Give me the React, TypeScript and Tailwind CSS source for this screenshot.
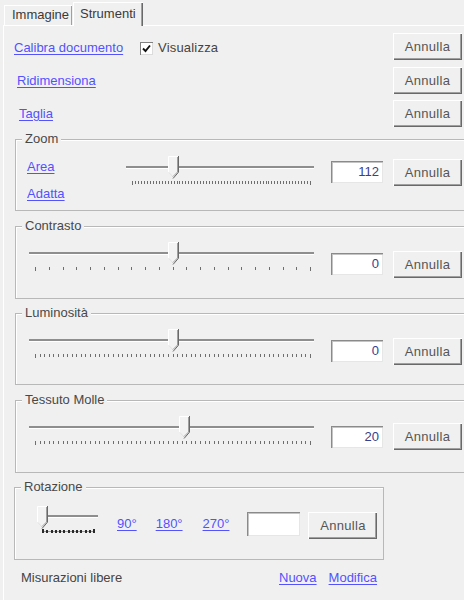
import React from "react";

const link = "text-[#5252ff] underline underline-offset-2 decoration-1";

function Button({ className = "" }: { className?: string }) {
  return (
    <button
      className={`flex h-[27px] w-[69px] shrink-0 items-center justify-center bg-[#f0f0f0] text-[#555] tracking-[0.3px] shadow-[inset_1px_1px_0_#ffffff,inset_-1px_-1px_0_#696969,inset_-2px_-2px_0_#a0a0a0] ${className}`}
    >
      Annulla
    </button>
  );
}

function Field({ value, className = "" }: { value: string; className?: string }) {
  return (
    <div
      className={`flex h-[22px] w-[52px] shrink-0 items-center justify-end bg-white pr-[4px] text-[#34418f] shadow-[inset_1px_1px_0_#8a8a8a,inset_2px_2px_0_#c4c4c4,inset_-1px_-1px_0_#e6e6e6] ${className}`}
    >
      {value}
    </div>
  );
}

function Group({
  title,
  className = "",
  children,
}: {
  title: string;
  className?: string;
  children?: React.ReactNode;
}) {
  return (
    <div className={`relative border border-[#b8b8b8] shadow-[inset_1px_1px_0_#ffffff] ${className}`}>
      <span className="absolute -top-[9px] left-[6px] bg-[#f0f0f0] px-[3px] text-[#484848]">{title}</span>
      {children}
    </div>
  );
}

function Thumb({ x }: { x: number }) {
  return (
    <g>
      <polygon points={`${x},0 ${x + 10},0 ${x + 10},16 ${x + 5},22 ${x},16`} fill="#f3f3f3" />
      <polyline points={`${x + 0.5},16 ${x + 0.5},0.5 ${x + 10.5},0.5`} fill="none" stroke="#ffffff" />
      <polyline points={`${x + 1},16.5 ${x + 5.5},21.5`} fill="none" stroke="#e2e2e2" />
      <polyline points={`${x + 9.5},1 ${x + 9.5},16 ${x + 5},20.5`} fill="none" stroke="#a0a0a0" />
      <polyline points={`${x + 10.5},0 ${x + 10.5},16.2 ${x + 5},22.5`} fill="none" stroke="#696969" />
    </g>
  );
}

function Slider({
  w,
  pos,
  ticks,
  className = "",
}: {
  w: number;
  pos: number;
  ticks: number;
  className?: string;
}) {
  const a = 6;
  const b = w - 4;
  const xs = Array.from({ length: ticks }, (_, i) => Math.round(a + ((b - a) * i) / (ticks - 1)));
  const cx = Math.round(a + (b - a) * pos);
  return (
    <svg width={w} height={30} className={`block shrink-0 ${className}`}>
      <rect x={0} y={10} width={w} height={2} fill="#8e8e8e" />
      <rect x={0} y={12} width={w} height={1} fill="#ffffff" />
      {xs.map((x, i) => (
        <rect
          key={i}
          x={x}
          y={25}
          width={1}
          height={i === 0 || i === ticks - 1 ? 4 : 3}
          fill="#6e6e6e"
        />
      ))}
      <Thumb x={cx - 5} />
    </svg>
  );
}

function RotSlider({ className = "" }: { className?: string }) {
  const xs = Array.from({ length: 13 }, (_, i) => 5 + i * 4.25);
  return (
    <svg width={61} height={30} className={`block shrink-0 ${className}`}>
      <rect x={10} y={9} width={51} height={2} fill="#8e8e8e" />
      <rect x={10} y={11} width={51} height={1} fill="#ffffff" />
      <rect x={5} y={25} width={51} height={1} fill="#9a9a9a" />
      {xs.map((x, i) => (
        <rect
          key={i}
          x={Math.round(x)}
          y={i === 0 || i === 12 ? 23 : 24}
          width={2}
          height={i === 0 || i === 12 ? 4 : 3}
          fill="#2a2a2a"
        />
      ))}
      <Thumb x={0} />
    </svg>
  );
}

export default function App() {
  return (
    <div className="h-[600px] w-[464px] overflow-hidden bg-[#f0f0f0] font-['Liberation_Sans',Arial,sans-serif] text-[13px] leading-4 text-[#3a3a3a]">
      <div className="flex h-[25px] items-end pl-[4px]">
        <div className="h-[20px] w-[68px] border-l border-t border-white pl-[7px] pt-[1px] shadow-[inset_-1px_0_0_#a0a0a0]">
          Immagine
        </div>
        <div className="relative z-10 -mb-px ml-px h-[24px] w-[70px] border-l border-t border-white bg-[#f0f0f0] pl-[6px] pt-[3px] shadow-[inset_-1px_0_0_#696969,inset_-2px_0_0_#a0a0a0]">
          Strumenti
        </div>
      </div>

      <div className="ml-[3px] h-[575px] border-l border-t border-white pr-[2px] pt-[7px]">
        <div className="flex h-[27px] items-center">
          <div className="ml-[10px] mt-[3px] flex w-[126px] items-center">
            <a className={link}>Calibra documento</a>
          </div>
          <div className="mt-[3px] flex h-[13px] w-[13px] items-center justify-center bg-white shadow-[inset_1px_1px_0_#808080,inset_-1px_-1px_0_#dcdcdc]">
            <svg width="9" height="9" viewBox="0 0 9 9">
              <path d="M1 4.5 L3.5 7 L8 1.5" fill="none" stroke="#111" strokeWidth="1.9" />
            </svg>
          </div>
          <span className="ml-[5px] mt-[2px] tracking-[0.2px] text-[#444]">Visualizza</span>
          <Button className="ml-auto" />
        </div>

        <div className="mt-[7px] flex h-[27px] items-center">
          <a className={`${link} ml-[13px]`}>Ridimensiona</a>
          <Button className="ml-auto" />
        </div>

        <div className="mt-[6px] flex h-[27px] items-center">
          <a className={`${link} ml-[15px]`}>Taglia</a>
          <Button className="ml-auto" />
        </div>

        <Group title="Zoom" className="-mr-[6px] ml-[11px] mt-[12px] h-[72px]">
          <div className="flex items-start">
            <div className="ml-[11px] mt-[19px] flex w-[99px] flex-col items-start gap-[11px]">
              <a className={link}>Area</a>
              <a className={link}>Adatta</a>
            </div>
            <Slider w={188} pos={0.228} ticks={61} className="mt-[16px]" />
            <Field value="112" className="ml-[17px] mt-[21px]" />
            <Button className="ml-[10px] mt-[19px]" />
          </div>
        </Group>

        <Group title="Contrasto" className="-mr-[6px] ml-[11px] mt-[15px] h-[73px]">
          <div className="flex items-start">
            <Slider w={285} pos={0.5} ticks={21} className="ml-[13px] mt-[15px]" />
            <Field value="0" className="ml-[17px] mt-[26px]" />
            <Button className="ml-[10px] mt-[24px]" />
          </div>
        </Group>

        <Group title="Luminosità" className="-mr-[6px] ml-[11px] mt-[14px] h-[72px]">
          <div className="flex items-start">
            <Slider w={285} pos={0.5} ticks={61} className="ml-[13px] mt-[15px]" />
            <Field value="0" className="ml-[17px] mt-[26px]" />
            <Button className="ml-[10px] mt-[24px]" />
          </div>
        </Group>

        <Group title="Tessuto Molle" className="-mr-[6px] ml-[11px] mt-[15px] h-[73px]">
          <div className="flex items-start">
            <Slider w={285} pos={0.54} ticks={61} className="ml-[13px] mt-[15px]" />
            <Field value="20" className="ml-[17px] mt-[25px]" />
            <Button className="ml-[10px] mt-[22px]" />
          </div>
        </Group>

        <Group title="Rotazione" className="ml-[10px] mt-[14px] h-[73px] w-[370px]">
          <div className="flex items-start">
            <RotSlider className="ml-[22px] mt-[18px]" />
            <a className={`${link} ml-[19px] mt-[28px]`}>90°</a>
            <a className={`${link} ml-[19px] mt-[28px]`}>180°</a>
            <a className={`${link} ml-[20px] mt-[28px]`}>270°</a>
            <Field value="" className="ml-[18px] mt-[24px] h-[24px] w-[53px]" />
            <Button className="ml-[8px] mt-[24px] h-[26px]" />
          </div>
        </Group>

        <div className="mt-[10px] flex items-center">
          <span className="ml-[17px] w-[258px] text-[#444]">Misurazioni libere</span>
          <a className={link}>Nuova</a>
          <a className={`${link} ml-[12px]`}>Modifica</a>
        </div>
      </div>
    </div>
  );
}
